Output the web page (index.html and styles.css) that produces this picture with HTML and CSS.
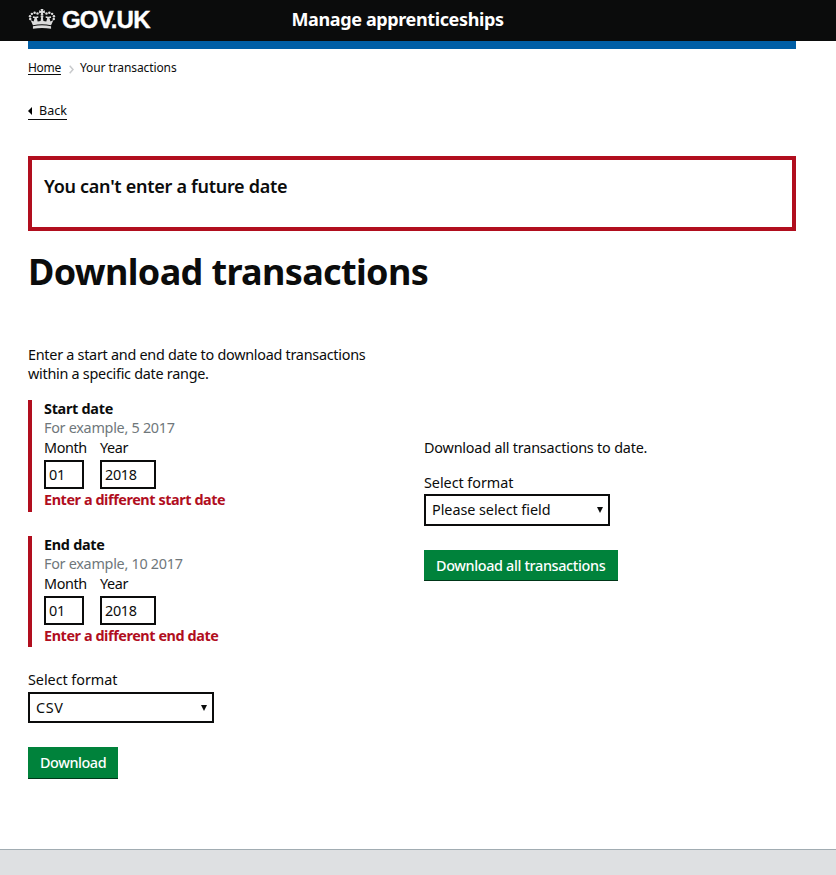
FILE: index.html
```
<!DOCTYPE html>
<html lang="en">
<head>
<meta charset="utf-8">
<title>Download transactions</title>
<link rel="stylesheet" href="styles.css">
</head>
<body>
<header class="site-header">
  <a class="logo">
    <svg class="crown" viewBox="0 0 28 22" width="28" height="21" fill="#dcdcdc">
      <path d="M12.500 0h3l-.6 2 2.100-.6v3l-2.100-.5.6 2.600h-3l.6-2.600-2.100.5v-3l2.100.6z"/>
      <circle cx="14" cy="8" r="1.500"/>
      <circle cx="9.300" cy="4.800" r="1.300"/><circle cx="6.300" cy="3.900" r="1.300"/><circle cx="3.400" cy="5.100" r="1.300"/><circle cx="1.500" cy="7.500" r="1.300"/><circle cx="1.700" cy="10.400" r="1.300"/>
      <circle cx="18.700" cy="4.800" r="1.300"/><circle cx="21.700" cy="3.900" r="1.300"/><circle cx="24.600" cy="5.100" r="1.300"/><circle cx="26.500" cy="7.500" r="1.300"/><circle cx="26.300" cy="10.400" r="1.300"/>
      <path d="M2 11.500l2.500 5.500q9.500-2.200 19 0l2.500-5.500-3.200 1.500-1-3.500 1.700-.2v-1.600l-2.800.4-2.800-.4v1.600l1.600.2-1 3.700-3-.6-.6-3.600h-1.800l-.6 3.600-3 .6-1-3.700 1.600-.2v-1.600l-2.800.4-2.800-.4v1.600l1.700.2-1 3.500z"/>
      <path d="M4.500 18q9.500-2.200 19 0v2.800q-9.500-1.600-19 0z"/>
    </svg>
    <span class="logo-text">GOV.UK</span>
  </a>
  <span class="service-name">Manage apprenticeships</span>
</header>
<main class="container">
  <nav class="breadcrumbs">
    <a class="crumb-link">Home</a>
    <svg class="chevron" width="5" height="9" viewBox="0 0 5 9" fill="none" stroke="#c8cacc" stroke-width="1.500"><path d="M.7.700L4 4.500.7 8.300"/></svg>
    <span class="crumb">Your transactions</span>
  </nav>
  <a class="back"><svg width="4" height="8" viewBox="0 0 4 8"><path d="M4 0v8L0 4z"/></svg><span class="back-text">Back</span></a>
  <section class="error-summary"><h2 class="error-title">You can't enter a future date</h2></section>
  <h1 class="title">Download transactions</h1>
  <div class="columns">
    <form class="range">
      <p class="intro">Enter a start and end date to download transactions<br>within a specific date range.</p>
      <div class="date-group" role="group">
        <div class="legend">Start date</div>
        <div class="hint">For example, 5 2017</div>
        <div class="fields">
          <label class="field month">Month<input class="input" value="01"></label>
          <label class="field year">Year<input class="input" value="2018"></label>
        </div>
        <div class="error">Enter a different start date</div>
      </div>
      <div class="date-group end" role="group">
        <div class="legend">End date</div>
        <div class="hint">For example, 10 2017</div>
        <div class="fields">
          <label class="field month">Month<input class="input" value="01"></label>
          <label class="field year">Year<input class="input" value="2018"></label>
        </div>
        <div class="error">Enter a different end date</div>
      </div>
      <div class="format">Select format
        <div class="select"><span class="csv">CSV</span><i class="arrow"></i></div>
      </div>
      <button class="button" type="button">Download</button>
    </form>
    <form class="all">
      <p class="all-text">Download all transactions to date.</p>
      <div class="format">Select format
        <div class="select tall"><span>Please select field</span><i class="arrow"></i></div>
      </div>
      <button class="button" type="button">Download all transactions</button>
    </form>
  </div>
</main>
<footer class="footer"></footer>
</body>
</html>
```
FILE: styles.css
```
* { box-sizing: border-box; }
body { margin: 0; background: #fff; color: #0b0c0c; font: 14.4px/20px "Noto Sans", sans-serif; }
h1, h2, p { margin: 0; }
.site-header { display: flex; height: 41px; padding-left: 28px; background: #0b0c0c; color: #fff; }
.logo { display: flex; width: 263.500px; padding-top: 8px; }
.crown { margin-top: 1px; }
.logo-text { margin-left: 6px; font: bold 24px/24px "Liberation Sans", sans-serif; letter-spacing: -0.8px; -webkit-text-stroke: 0.4px #fff; }
.service-name { font-size: 18px; font-weight: 700; line-height: 39px; letter-spacing: -0.38px; }
.container { height: 808px; margin: 0 40px 0 28px; border-top: 8px solid #005ea5; }
.breadcrumbs { display: flex; align-items: center; height: 20px; margin-top: 9px; font-size: 12px; letter-spacing: -0.1px; }
.crumb-link { width: 33px; letter-spacing: -0.3px; text-decoration: underline; text-underline-offset: 2px; }
.chevron { margin: 3px 6px 0 8px; }
.back { display: flex; align-items: center; width: 39px; height: 18px; margin-top: 24px; border-bottom: 1px solid #0b0c0c; font-size: 12.500px; }
.back-text { margin-left: 7px; }
.error-summary { height: 75px; margin-top: 36px; padding: 15px 12px; border: 4px solid #b10e1e; }
.error-title { font-size: 18px; font-weight: 600; line-height: 22px; letter-spacing: -0.28px; }
.title { margin-top: 21px; font-size: 36px; font-weight: 700; line-height: 40px; letter-spacing: -0.65px; }
.columns { display: flex; margin-top: 53px; }
.range { width: 396px; }
.intro { line-height: 19px; letter-spacing: -0.27px; }
.date-group { height: 112px; margin-top: 17px; padding-left: 12px; border-left: 4px solid #b10e1e; }
.date-group.end { height: 111px; margin-top: 24px; }
.legend { height: 18px; line-height: 18px; font-weight: 700; letter-spacing: -0.28px; }
.hint { height: 20px; color: #6f777b; letter-spacing: -0.28px; }
.fields { display: flex; gap: 16px; }
.field { display: flex; flex-direction: column; width: 40px; white-space: nowrap; letter-spacing: -0.4px; }
.year { width: 56px; }
.input { width: 100%; height: 29px; margin-top: 2px; padding: 0 3px; border: 2px solid #0b0c0c; color: inherit; font: inherit; letter-spacing: -0.3px; }
.error { color: #b10e1e; font-weight: 700; line-height: 22px; letter-spacing: -0.42px; }
.format { margin-top: 23px; letter-spacing: -0.05px; }
.select { display: flex; align-items: center; justify-content: space-between; width: 186px; height: 31px; margin-top: 2px; padding: 0 5px 0 6px; border: 2px solid #0b0c0c; }
.all .select { height: 32px; margin-top: 1px; }
.csv { letter-spacing: 0.6px; }
.arrow { border: 3px solid transparent; border-top: 6px solid #0b0c0c; border-bottom: 0; }
.button { display: block; height: 31px; margin-top: 24px; padding: 0 0 0 12px; width: 90px; border: 0; background: #00823b; color: #fff; font: 500 14.4px/20px "Noto Sans", sans-serif; letter-spacing: -0.42px; text-align: left; box-shadow: 0 1px 0 #003618; }
.all .button { width: 194px; height: 30px; padding-top: 2px; letter-spacing: -0.35px; }
.all { padding-top: 93px; }
.all-text { letter-spacing: -0.2px; }
.all .format { margin-top: 15px; }
.footer { height: 26px; border-top: 1px solid #a1acb2; background: #dee0e2; }
```
